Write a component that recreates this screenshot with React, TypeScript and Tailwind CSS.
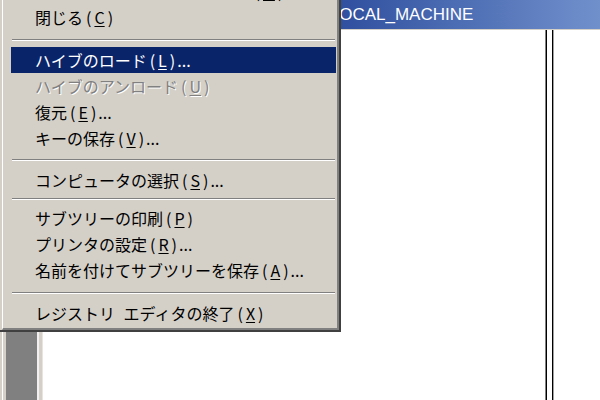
type MenuEntry =
  | { kind: "item"; label: string; key: string; tail?: string; active?: boolean; disabled?: boolean }
  | { kind: "sep"; h: string; pad: string };

const MENU: MenuEntry[] = [
  { kind: "item", label: "ローカル コンピュータを開く", key: "O" },
  { kind: "item", label: "閉じる", key: "C" },
  { kind: "sep", h: "h-[17px]", pad: "pt-[9px]" },
  { kind: "item", label: "ハイブのロード", key: "L", tail: "...", active: true },
  { kind: "item", label: "ハイブのアンロード", key: "U", disabled: true },
  { kind: "item", label: "復元", key: "E", tail: "..." },
  { kind: "item", label: "キーの保存", key: "V", tail: "..." },
  { kind: "sep", h: "h-[16px]", pad: "pt-[8px]" },
  { kind: "item", label: "コンピュータの選択", key: "S", tail: "..." },
  { kind: "sep", h: "h-[12px]", pad: "pt-[5px]" },
  { kind: "item", label: "サブツリーの印刷", key: "P" },
  { kind: "item", label: "プリンタの設定", key: "R", tail: "..." },
  { kind: "item", label: "名前を付けてサブツリーを保存", key: "A", tail: "..." },
  { kind: "sep", h: "h-[17px]", pad: "pt-[9px]" },
  { kind: "item", label: "レジストリ エディタの終了", key: "X" },
];

function MenuRow({ entry }: { entry: Extract<MenuEntry, { kind: "item" }> }) {
  const tone = entry.active
    ? "bg-[#0a246a] text-white"
    : entry.disabled
      ? "text-[#808080] [text-shadow:1px_1px_0_#ffffff]"
      : "text-black";
  return (
    <div
      className={`flex h-[26px] items-center pl-[24px] text-[16px] leading-none whitespace-pre [word-spacing:5px] ${tone}`}
    >
      {entry.label}
      <span className="ml-[3px] mr-[3px]">(</span>
      <span className="underline underline-offset-2">{entry.key}</span>
      <span className="ml-[3px] mr-[2px]">)</span>
      {entry.tail}
    </div>
  );
}

function RegistryMenu() {
  return (
    <div className="absolute left-0 top-[-22px] w-[341px] border-r-2 border-b-2 border-[#404040] bg-[#d4d0c8] pl-[2px] font-['Noto_Sans_CJK_JP',sans-serif]">
      <div className="border-l border-l-white border-r-2 border-b-2 border-r-[#808080] border-b-[#808080] pb-[2px] pl-[8px] pr-[1px]">
        {MENU.map((entry, i) =>
          entry.kind === "sep" ? (
            <div key={i} className={`${entry.h} ${entry.pad}`}>
              <div className="mx-[1px] h-px bg-[#808080]" />
              <div className="mx-[1px] h-px bg-white" />
            </div>
          ) : (
            <MenuRow key={i} entry={entry} />
          ),
        )}
      </div>
    </div>
  );
}

export default function App() {
  return (
    <div className="relative h-[400px] w-[600px] overflow-hidden bg-white">
      <div className="flex h-full">
        {/* frame edge and dark strip of the parent window */}
        <div className="flex w-[43px] shrink-0">
          <div className="w-[2px] bg-[#d4d0c8]" />
          <div className="w-px bg-white" />
          <div className="w-[3px] bg-[#d4d0c8]" />
          <div className="w-[31px] bg-[#808080]" />
          <div className="w-[2px] bg-[#f0f0f0]" />
          <div className="w-[3px] bg-[#d4d0c8]" />
          <div className="w-px bg-[#e8e4dc]" />
        </div>

        {/* child window */}
        <div className="flex flex-1 flex-col">
          <div className="flex h-[29px] items-center bg-[linear-gradient(to_right,#0a246a,#2f4f9f_53%,#7090cc)] pl-[231px] font-['Liberation_Sans',sans-serif] text-[17px] leading-none text-white">
            HKEY_LOCAL_MACHINE
          </div>
          <div className="h-px bg-[#d4d0c8]" />
          <div className="flex flex-1">
            <div className="w-[502px]" />
            <div className="w-px bg-[#808080]" />
            <div className="w-px bg-black" />
            <div className="w-[5px] bg-white" />
            <div className="w-px bg-black" />
            <div className="w-px bg-[#a0a0a0]" />
            <div className="flex-1" />
          </div>
        </div>
      </div>

      <RegistryMenu />
    </div>
  );
}
